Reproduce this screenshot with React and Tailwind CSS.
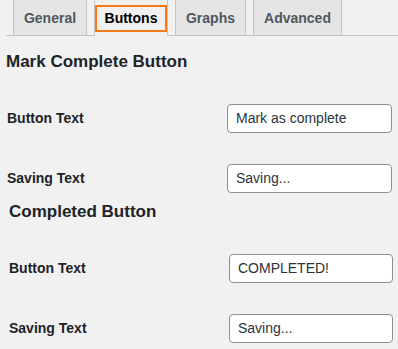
import React from 'react';

const tabs = [
  { key: 'general', label: 'General', w: 'w-[74px]' },
  { key: 'buttons', label: 'Buttons', w: 'w-[74px]' },
  { key: 'graphs', label: 'Graphs', w: 'w-[71px]' },
  { key: 'advanced', label: 'Advanced', w: 'w-[89px]' },
];

function Field({ label, value, indent }) {
  return (
    <div className={`mt-[30px] h-[30px] flex items-center justify-between ${indent ? 'pl-[3px] pr-[5px]' : 'pl-[1px] pr-[6px]'}`}>
      <span className="text-[14px] font-bold text-[#1d2327]">{label}</span>
      <input
        readOnly
        value={value}
        className={`${indent ? 'w-[164px]' : 'w-[165px]'} h-[29px] bg-white border border-[#8c8f94] rounded-[4px] px-[8px] text-[14px] text-[#2c3338] outline-none`}
      />
    </div>
  );
}

export default function App() {
  const active = 'buttons';

  return (
    <div className="w-[398px] h-[349px] overflow-hidden bg-[#f1f1f1] font-['Liberation_Sans',Arial,sans-serif]">
      <div className="ml-[6px]">
        {/* Tabs */}
        <div className="h-[36px] flex items-end gap-[7px] pl-[7px] border-b border-[#c3c4c7]">
          {tabs.map(tab => (
            <div
              key={tab.key}
              className={`relative ${tab.w} h-[37px] -mb-px flex items-center justify-center border border-[#c3c4c7] text-[14px] font-bold pt-[1px]
                ${tab.key === active
                  ? 'bg-[#f1f1f1] border-b-[#f1f1f1] text-[#000]'
                  : 'bg-[#e5e5e5] text-[#50575e]'
                }`}
            >
              {tab.label}
              {tab.key === active && (
                <span className="absolute left-[0px] right-[0px] top-[5px] bottom-[3px] border-2 border-[#f77a16]" />
              )}
            </div>
          ))}
        </div>

        {/* Mark Complete Button */}
        <h2 className="mt-[15px] h-[22px] leading-[22px] text-[17px] font-bold text-[#1d2327]">Mark Complete Button</h2>
        <Field label="Button Text" value="Mark as complete" />
        <Field label="Saving Text" value="Saving..." />

        {/* Completed Button */}
        <h2 className="mt-[8px] h-[22px] leading-[22px] pl-[3px] text-[17px] font-bold text-[#1d2327]">Completed Button</h2>
        <Field label="Button Text" value="COMPLETED!" indent />
        <Field label="Saving Text" value="Saving..." indent />
      </div>
    </div>
  );
}
